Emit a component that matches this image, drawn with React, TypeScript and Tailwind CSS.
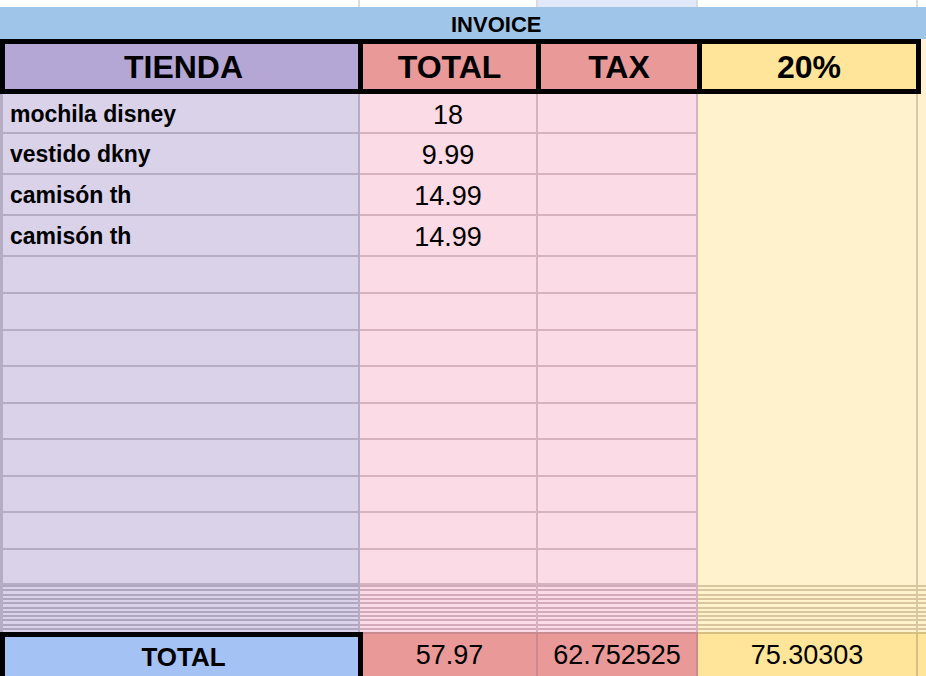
const ITEMS = [
  { name: "mochila disney", total: "18", h: "h-[40px]" },
  { name: "vestido dkny", total: "9.99", h: "h-[41px]" },
  { name: "camisón th", total: "14.99", h: "h-[41px]" },
  { name: "camisón th", total: "14.99", h: "h-[41px]" },
];

// empty rows below the items, heights add up to the sheet's 328px
const EMPTY = ["h-[37px]", "h-[37px]", "h-[36px]", "h-[37px]", "h-[36px]", "h-[37px]", "h-[36px]", "h-[37px]", "h-[35px]"];

const STRIPE_A = "bg-[repeating-linear-gradient(to_bottom,#aea6bf_0px,#aea6bf_2px,#d9d2e9_2px,#d9d2e9_4.3px)]";
const STRIPE_B = "bg-[repeating-linear-gradient(to_bottom,#d2aab9_0px,#d2aab9_2px,#fadbe6_2px,#fadbe6_4.3px)]";
const STRIPE_D = "bg-[repeating-linear-gradient(to_bottom,#d9c69e_0px,#d9c69e_2px,#fff2cc_2px,#fff2cc_4.3px)]";

function ItemRow({ h, name, total }: { h: string; name?: string; total?: string }) {
  return (
    <div className={`flex ${h}`}>
      <div className="w-[360px] border-l-[3px] border-r-2 border-b-2 border-[#b4adc4] bg-[#d9d2e9] pl-[7px] pt-[9px] text-[23px] font-bold leading-none">
        {name}
      </div>
      <div className="w-[178px] border-r-2 border-b-2 border-[#d6b1bf] bg-[#fadbe6] pt-[8px] text-center text-[27px] leading-none">
        {total}
      </div>
      <div className="w-[160px] border-r-2 border-b-2 border-[#d6b1bf] bg-[#fadbe6]" />
    </div>
  );
}

export default function App() {
  return (
    <div className="h-[676px] w-[926px] overflow-hidden bg-white font-['Liberation_Sans',Arial,sans-serif] text-black">
      {/* row above the invoice */}
      <div className="flex h-[7px]">
        <div className="w-[360px] border-r-2 border-[#dadce0]" />
        <div className="w-[178px] border-r-2 border-[#dadce0]" />
        <div className="w-[160px] border-r-2 border-[#dadce0] bg-[#e1e8fa]" />
        <div className="w-[220px] border-r-2 border-[#dadce0]" />
        <div className="flex-1" />
      </div>

      <div className="h-[32px] bg-[#9fc5e8] pl-[451px] pt-[7px] text-[22px] font-bold leading-none">INVOICE</div>

      {/* headers */}
      <div className="flex h-[55px] text-[32px] font-bold leading-none">
        <div className="flex w-[363px] items-center justify-center border-y-[5px] border-l-[5px] border-r-[5px] border-black bg-[#b4a7d6] pl-[4px]">
          TIENDA
        </div>
        <div className="flex w-[178px] items-center justify-center border-y-[5px] border-r-[5px] border-black bg-[#ea9999]">
          TOTAL
        </div>
        <div className="flex w-[161px] items-center justify-center border-y-[5px] border-r-[5px] border-black bg-[#ea9999]">
          TAX
        </div>
        <div className="flex w-[219px] items-center justify-center border-y-[5px] border-r-[5px] border-black bg-[#ffe599]">
          20%
        </div>
        <div className="flex-1 bg-[#fff2cc]" />
      </div>

      {/* body */}
      <div className="flex">
        <div className="flex w-[698px] flex-col">
          {ITEMS.map((it, i) => (
            <ItemRow key={i} h={it.h} name={it.name} total={it.total} />
          ))}
          {EMPTY.map((h, i) => (
            <ItemRow key={"e" + i} h={h} />
          ))}
        </div>
        <div className="w-[220px] border-r-2 border-[#dac8a0] bg-[#fff2cc]" />
        <div className="flex-1 bg-[#fff2cc]" />
      </div>

      {/* hidden rows */}
      <div className="flex h-[47px]">
        <div className={`w-[360px] border-l-[3px] border-r-2 border-[#b4adc4] ${STRIPE_A}`} />
        <div className={`w-[178px] border-r-2 border-[#d6b1bf] ${STRIPE_B}`} />
        <div className={`w-[160px] border-r-2 border-[#d6b1bf] ${STRIPE_B}`} />
        <div className={`w-[220px] border-r-2 border-[#dac8a0] ${STRIPE_D}`} />
        <div className={`flex-1 ${STRIPE_D}`} />
      </div>

      {/* totals */}
      <div className="flex h-[50px]">
        <div className="w-[363px] border-l-[5px] border-r-[5px] border-t-[5px] border-black bg-[#a4c2f4] pl-[4px] pt-[7px] text-center text-[26px] font-bold leading-none">
          TOTAL
        </div>
        <div className="w-[175px] border-r-2 border-t-2 border-[#c98a90] bg-[#ea9999] pt-[8px] text-center text-[27px] leading-none">
          57.97
        </div>
        <div className="w-[160px] border-r-2 border-t-2 border-[#c98a90] bg-[#ea9999] pt-[8px] text-center text-[27px] leading-none">
          62.752525
        </div>
        <div className="w-[220px] border-r-2 border-t-2 border-[#d6bf7f] bg-[#ffe599] pt-[8px] text-center text-[27px] leading-none">
          75.30303
        </div>
        <div className="flex-1 border-t-2 border-[#d6bf7f] bg-[#ffe599]" />
      </div>
    </div>
  );
}
